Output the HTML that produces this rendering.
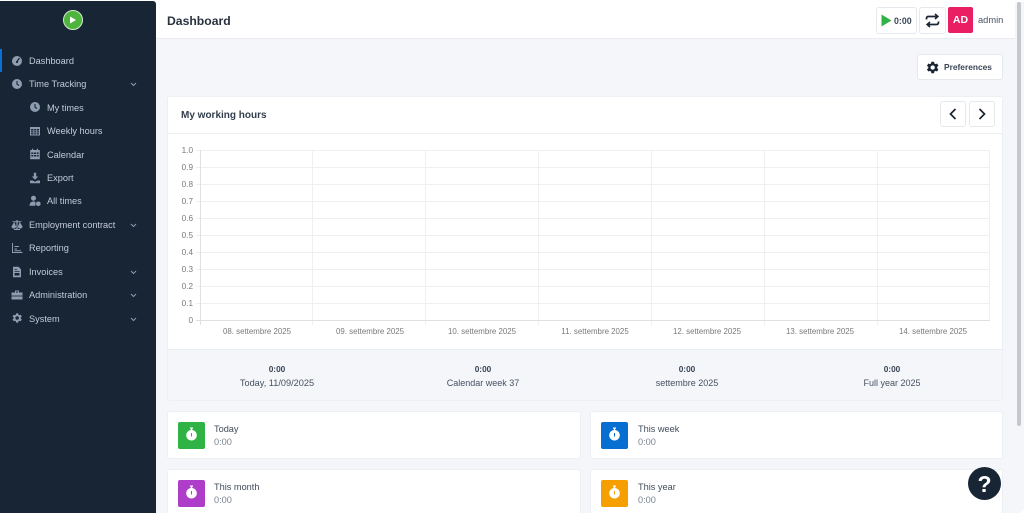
<!DOCTYPE html>
<html lang="en">
<head>
<meta charset="utf-8">
<title>Dashboard</title>
<style>
html,body{margin:0;padding:0;width:1024px;height:513px;overflow:hidden;background:#fff}
*{box-sizing:border-box}
body{font-family:"Liberation Sans",sans-serif;position:relative;color:#1e293b}
.a{position:absolute}
.t{position:absolute;white-space:nowrap;line-height:14px}
#main{left:156px;top:2px;width:868px;height:511px;background:#f4f6fa;border-bottom-right-radius:6px}
#side{left:0;top:1px;width:156px;height:512px;background:#182535;border-top-right-radius:3px}
.nav{position:absolute;color:#c3ccd8;font-size:9.2px;line-height:14px;white-space:nowrap}
.ico{position:absolute;width:12px;height:12px;fill:#8e9cb0}
.chev{position:absolute;left:130px;width:7px;height:5px;fill:none;stroke:#8e9cb0;stroke-width:1}
.card{position:absolute;background:#fff;border:1px solid #eceff3;border-radius:3px}
.btn{position:absolute;background:#fff;border:1px solid #e5e8ed;border-radius:3px}
.sq{position:absolute;width:27px;height:27px;border-radius:2px}
.sq svg{position:absolute;left:7px;top:5px;width:13px;height:15px;fill:#fff}
.lab{position:absolute;font-size:9.2px;color:#414c5c;line-height:12px;white-space:nowrap}
.val{position:absolute;font-size:9.2px;color:#7b8491;line-height:12px;white-space:nowrap}
.yl{position:absolute;width:20px;text-align:right;font-size:8.2px;color:#7a7a7a;line-height:10px;left:173px}
.xl{position:absolute;width:112px;text-align:center;font-size:7.9px;color:#7a7a7a;line-height:10px;top:327px;white-space:nowrap}
.sv{position:absolute;width:200px;text-align:center;font-size:8.3px;font-weight:bold;color:#3a4656;line-height:10px;top:364px}
.sl{position:absolute;width:200px;text-align:center;font-size:9px;color:#465161;line-height:12px;top:377px}
</style>
</head>
<body>
<div class="a" id="main"></div>
<div class="a" style="left:1017px;top:2px;width:4px;height:424px;background:#c4c7cc;border-radius:2px"></div>

<!-- sidebar -->
<div class="a" id="side"></div>
<div class="a" style="left:63px;top:10px;width:20px;height:20px;border-radius:50%;background:#4db53c;border:1px solid #d5e8d0"></div>
<svg class="a" style="left:69px;top:16px;width:8px;height:8px"><path d="M1 0.500 L7 4 L1 7.500Z" fill="#fff"/></svg>
<div class="a" style="left:0;top:49px;width:2px;height:23px;background:#0a6fd8"></div>

<svg class="ico" style="left:11px;top:55px" viewBox="0 0 12 12"><circle cx="6" cy="6" r="5"/><path d="M6 6.500 L8.500 3" stroke="#182535" stroke-width="1.200"/><circle cx="6" cy="7" r="1.100" fill="#182535"/></svg>
<div class="nav" style="left:29px;top:54px">Dashboard</div>
<svg class="ico" style="left:11px;top:78px" viewBox="0 0 12 12"><circle cx="6" cy="6" r="5"/><path d="M6 3 V6.200 L8 7.500" stroke="#182535" stroke-width="1.100" fill="none"/></svg>
<div class="nav" style="left:29px;top:77px">Time Tracking</div>
<svg class="chev" style="top:82px" viewBox="0 0 7 5"><path d="M1 1 L3.500 3.500 L6 1"/></svg>

<svg class="ico" style="left:29px;top:101px" viewBox="0 0 12 12"><circle cx="6" cy="6" r="5"/><path d="M6 3 V6.200 L8 7.500" stroke="#182535" stroke-width="1.100" fill="none"/></svg>
<div class="nav" style="left:47px;top:101px">My times</div>
<svg class="ico" style="left:29px;top:125px" viewBox="0 0 12 12"><path d="M1 2 H11 V10.500 H1Z M2 4 V5.500 H4.500 V4Z M5.200 4 V5.500 H7 V4Z M7.700 4 V5.500 H10 V4Z M2 6.200 V7.500 H4.500 V6.200Z M5.200 6.200 V7.500 H7 V6.200Z M7.700 6.200 V7.500 H10 V6.200Z M2 8.200 V9.500 H4.500 V8.200Z M5.200 8.200 V9.500 H7 V8.200Z M7.700 8.200 V9.500 H10 V8.200Z" fill-rule="evenodd"/></svg>
<div class="nav" style="left:47px;top:124px">Weekly hours</div>
<svg class="ico" style="left:29px;top:148px" viewBox="0 0 12 12"><path d="M3 .8 H4.200 V2 H7.800 V.8 H9 V2 H10.800 V11.200 H1.200 V2 H3Z M2.300 4.500 V6 H4.300 V4.500Z M5 4.500 V6 H7 V4.500Z M7.700 4.500 V6 H9.700 V4.500Z M2.300 7 V8.500 H4.300 V7Z M5 7 V8.500 H7 V7Z M7.700 7 V8.500 H9.700 V7Z" fill-rule="evenodd"/></svg>
<div class="nav" style="left:47px;top:148px">Calendar</div>
<svg class="ico" style="left:29px;top:172px" viewBox="0 0 12 12"><path d="M4.800 .8 H7.200 V4.500 H9.200 L6 7.800 L2.800 4.500 H4.800Z M1 8.500 H3.500 L6 9.800 L8.500 8.500 H11 V11.200 H1Z"/></svg>
<div class="nav" style="left:47px;top:171px">Export</div>
<svg class="ico" style="left:29px;top:195px;width:14px" viewBox="0 0 14 12"><circle cx="4.500" cy="3.200" r="2.500"/><path d="M.5 10.800 C.5 7.500 2.500 6.500 4.500 6.500 C5.500 6.500 6 6.700 6.500 7 V10.800Z"/><circle cx="9.300" cy="8.800" r="2.300"/></svg>
<div class="nav" style="left:47px;top:194px">All times</div>

<svg class="ico" style="left:10px;top:219px;width:14px" viewBox="0 0 14 12"><path d="M6.400 1 H7.600 V2.200 H11.500 V3 H9.800 L12.500 7.500 C12.500 9 11.300 9.500 10.200 9.500 C9 9.500 8 9 8 7.500 L9.600 3.200 H7.600 V10 H10 V11 H4 V10 H6.400 V3.200 H4.400 L6 7.500 C6 9 5 9.500 3.800 9.500 C2.700 9.500 1.500 9 1.500 7.500 L4.200 3 H2.500 V2.200 H6.400Z"/></svg>
<div class="nav" style="left:29px;top:218px">Employment contract</div>
<svg class="chev" style="top:223px" viewBox="0 0 7 5"><path d="M1 1 L3.500 3.500 L6 1"/></svg>

<svg class="ico" style="left:11px;top:242px" viewBox="0 0 12 12"><path d="M1 1 H2 V10 H11.500 V11 H1Z M3.500 6.500 H6 V7.500 H3.500Z M3.500 4 H8 V5 H3.500Z M3.500 8.300 H10 V9.200 H3.500Z"/></svg>
<div class="nav" style="left:29px;top:241px">Reporting</div>

<svg class="ico" style="left:11px;top:266px" viewBox="0 0 12 12"><path d="M2 .8 H7.500 L10 3.300 V11.200 H2Z M3.500 3 V3.800 H6 V3Z M3.500 5 V5.800 H8.500 V5Z M3.500 7 V9.500 H8.500 V7Z" fill-rule="evenodd"/></svg>
<div class="nav" style="left:29px;top:265px">Invoices</div>
<svg class="chev" style="top:270px" viewBox="0 0 7 5"><path d="M1 1 L3.500 3.500 L6 1"/></svg>

<svg class="ico" style="left:11px;top:289px" viewBox="0 0 12 12"><path d="M4 1.500 H8 V3.500 H11.500 V10.500 H.5 V3.500 H4Z M5 2.500 V3.500 H7 V2.500Z" fill-rule="evenodd"/><path d="M.5 7 H11.500" stroke="#182535" stroke-width=".8"/></svg>
<div class="nav" style="left:29px;top:288px">Administration</div>
<svg class="chev" style="top:293px" viewBox="0 0 7 5"><path d="M1 1 L3.500 3.500 L6 1"/></svg>

<svg class="ico" style="left:11px;top:312px" viewBox="0 0 24 24"><path d="M19.400 13a7.500 7.500 0 0 0 0-2l2.200-1.700-2.200-3.700-2.600 1a7.500 7.500 0 0 0-1.800-1L14.500 2.800h-4.400L9.700 5.600a7.500 7.500 0 0 0-1.800 1l-2.600-1-2.200 3.700L5.300 11a7.500 7.500 0 0 0 0 2l-2.200 1.700 2.200 3.700 2.600-1a7.500 7.500 0 0 0 1.800 1l.4 2.800h4.400l.4-2.800a7.500 7.500 0 0 0 1.800-1l2.600 1 2.200-3.700zM12.300 15.500a3.500 3.500 0 1 1 0-7 3.500 3.500 0 0 1 0 7z"/></svg>
<div class="nav" style="left:29px;top:312px">System</div>
<svg class="chev" style="top:317px" viewBox="0 0 7 5"><path d="M1 1 L3.500 3.500 L6 1"/></svg>

<!-- header -->
<div class="a" style="left:156px;top:2px;width:859px;height:37px;background:#fff;border-bottom:1px solid #e9ecf0"></div>
<div class="t" style="left:167px;top:13px;font-size:12.200px;font-weight:bold;color:#28323f;line-height:16px">Dashboard</div>

<div class="btn" style="left:876px;top:7px;width:41px;height:27px"></div>
<svg class="a" style="left:881px;top:14px;width:11px;height:13px"><path d="M0.500 0.500 L10.500 6.500 L0.500 12.500Z" fill="#2fb344"/></svg>
<div class="t" style="left:894px;top:14px;font-size:8.800px;font-weight:bold;color:#3a4656">0:00</div>
<div class="btn" style="left:919px;top:7px;width:27px;height:27px"></div>
<svg class="a" style="left:925px;top:13px;width:15px;height:15px" viewBox="0 0 15 15" fill="none" stroke="#1b2533" stroke-width="1.700"><path d="M1.500 6.500 V5.500 Q1.500 3.500 3.500 3.500 H12"/><path d="M10 1 L12.800 3.500 L10 6"/><path d="M13.500 8.500 V9.500 Q13.500 11.500 11.500 11.500 H3"/><path d="M5 9 L2.200 11.500 L5 14"/></svg>
<div class="a" style="left:948px;top:7px;width:25px;height:26px;background:#e91e63;border-radius:2px;color:#fff;font-size:10.500px;font-weight:bold;text-align:center;line-height:26px">AD</div>
<div class="t" style="left:978px;top:13px;font-size:9.300px;color:#4a5563">admin</div>

<!-- preferences -->
<div class="btn" style="left:917px;top:54px;width:86px;height:26px"></div>
<svg class="a" style="left:925px;top:60px;width:15px;height:15px;fill:#182535" viewBox="0 0 24 24"><path d="M19.400 13a7.500 7.500 0 0 0 0-2l2.200-1.700-2.200-3.700-2.600 1a7.500 7.500 0 0 0-1.800-1L14.500 2.800h-4.400L9.700 5.600a7.500 7.500 0 0 0-1.800 1l-2.600-1-2.200 3.700L5.300 11a7.500 7.500 0 0 0 0 2l-2.200 1.700 2.200 3.700 2.600-1a7.500 7.500 0 0 0 1.800 1l.4 2.800h4.400l.4-2.800a7.500 7.500 0 0 0 1.800-1l2.600 1 2.200-3.700zM12.300 15.500a3.500 3.500 0 1 1 0-7 3.500 3.500 0 0 1 0 7z"/></svg>
<div class="t" style="left:944px;top:60px;font-size:8.400px;font-weight:bold;color:#3a4656">Preferences</div>

<!-- chart card -->
<div class="card" style="left:167px;top:96px;width:836px;height:305px;background:#f4f6fa"></div>
<div class="a" style="left:168px;top:97px;width:834px;height:253px;background:#fff;border-bottom:1px solid #e9ecf0"></div>
<div class="a" style="left:168px;top:133px;width:834px;height:1px;background:#eceff3"></div>
<div class="t" style="left:181px;top:108px;font-size:10px;font-weight:bold;color:#333e4c;line-height:15px">My working hours</div>
<div class="btn" style="left:940px;top:101px;width:26px;height:26px"></div>
<svg class="a" style="left:948px;top:108px;width:10px;height:12px" fill="none" stroke="#1b2533" stroke-width="1.700"><path d="M7.500 1 L2.500 6 L7.500 11"/></svg>
<div class="btn" style="left:969px;top:101px;width:26px;height:26px"></div>
<svg class="a" style="left:977px;top:108px;width:10px;height:12px" fill="none" stroke="#1b2533" stroke-width="1.700"><path d="M2.500 1 L7.500 6 L2.500 11"/></svg>

<svg class="a" style="left:0;top:0;width:1024px;height:513px;pointer-events:none" fill="none">
<g stroke="#efefef" stroke-width="1">
<path d="M196 150.500H990M196 167.500H990M196 184.500H990M196 201.500H990M196 218.500H990M196 235.500H990M196 252.500H990M196 269.500H990M196 286.500H990M196 303.500H990"/>
<path d="M312.500 150V325M425.500 150V325M538.500 150V325M651.500 150V325M764.500 150V325M877.500 150V325M989.500 150V320"/>
</g>
<path d="M200.500 150V325M196 320.500H990" stroke="#e0e0e0"/>
</svg>
<div class="yl" style="top:146px">1.0</div>
<div class="yl" style="top:163px">0.9</div>
<div class="yl" style="top:180px">0.8</div>
<div class="yl" style="top:197px">0.7</div>
<div class="yl" style="top:214px">0.6</div>
<div class="yl" style="top:231px">0.5</div>
<div class="yl" style="top:248px">0.4</div>
<div class="yl" style="top:265px">0.3</div>
<div class="yl" style="top:282px">0.2</div>
<div class="yl" style="top:299px">0.1</div>
<div class="yl" style="top:316px">0</div>
<div class="xl" style="left:201px">08. settembre 2025</div>
<div class="xl" style="left:314px">09. settembre 2025</div>
<div class="xl" style="left:426px">10. settembre 2025</div>
<div class="xl" style="left:539px">11. settembre 2025</div>
<div class="xl" style="left:651px">12. settembre 2025</div>
<div class="xl" style="left:764px">13. settembre 2025</div>
<div class="xl" style="left:877px">14. settembre 2025</div>

<div class="sv" style="left:177px">0:00</div><div class="sl" style="left:177px;font-size:9.200px">Today, 11/09/2025</div>
<div class="sv" style="left:383px">0:00</div><div class="sl" style="left:383px">Calendar week 37</div>
<div class="sv" style="left:587px">0:00</div><div class="sl" style="left:587px">settembre 2025</div>
<div class="sv" style="left:792px">0:00</div><div class="sl" style="left:792px">Full year 2025</div>

<!-- stat cards -->
<div class="card" style="left:167px;top:411px;width:414px;height:48px"></div>
<div class="card" style="left:590px;top:411px;width:413px;height:48px"></div>
<div class="card" style="left:167px;top:469px;width:414px;height:60px"></div>
<div class="card" style="left:590px;top:469px;width:413px;height:60px"></div>

<div class="sq" style="left:178px;top:422px;background:#2fb344"><svg viewBox="0 0 13 15"><path d="M5 .5 H8 V1.700 H7.200 V3 A5.300 5.300 0 1 1 5.800 3 V1.700 H5Z M6 6 V9.500 H7 V6Z" fill-rule="evenodd"/></svg></div>
<div class="lab" style="left:214px;top:423px">Today</div>
<div class="val" style="left:214px;top:436px">0:00</div>

<div class="sq" style="left:601px;top:422px;background:#066fd1"><svg viewBox="0 0 13 15"><path d="M5 .5 H8 V1.700 H7.200 V3 A5.300 5.300 0 1 1 5.800 3 V1.700 H5Z M6 6 V9.500 H7 V6Z" fill-rule="evenodd"/></svg></div>
<div class="lab" style="left:638px;top:423px">This week</div>
<div class="val" style="left:638px;top:436px">0:00</div>

<div class="sq" style="left:178px;top:480px;background:#ae3ec9"><svg viewBox="0 0 13 15"><path d="M5 .5 H8 V1.700 H7.200 V3 A5.300 5.300 0 1 1 5.800 3 V1.700 H5Z M6 6 V9.500 H7 V6Z" fill-rule="evenodd"/></svg></div>
<div class="lab" style="left:214px;top:481px">This month</div>
<div class="val" style="left:214px;top:494px">0:00</div>

<div class="sq" style="left:601px;top:480px;background:#f59f00"><svg viewBox="0 0 13 15"><path d="M5 .5 H8 V1.700 H7.200 V3 A5.300 5.300 0 1 1 5.800 3 V1.700 H5Z M6 6 V9.500 H7 V6Z" fill-rule="evenodd"/></svg></div>
<div class="lab" style="left:638px;top:481px">This year</div>
<div class="val" style="left:638px;top:494px">0:00</div>

<!-- help -->
<div class="a" style="left:968px;top:467px;width:33px;height:33px;border-radius:50%;background:#182535;color:#fff;font-size:23px;font-weight:bold;text-align:center;line-height:34px">?</div>
</body>
</html>
